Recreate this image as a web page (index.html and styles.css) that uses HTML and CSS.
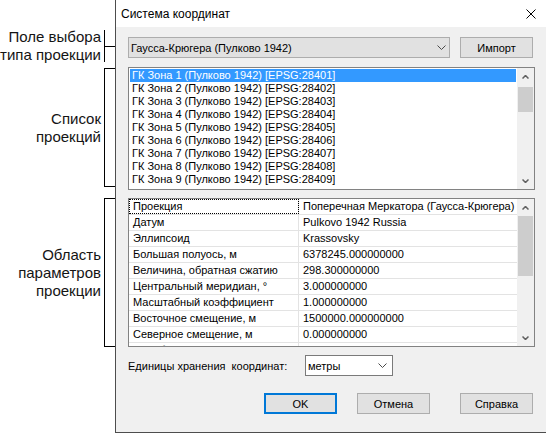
FILE: index.html
```html
<!DOCTYPE html>
<html lang="ru">
<head>
<meta charset="utf-8">
<title>Система координат</title>
<link rel="stylesheet" href="styles.css">
</head>
<body>
<div class="screen">
  <aside class="notes">
    <div class="note n1">
      <div class="note-text">Поле выбора<br>типа проекции</div>
      <div class="bracket"><span class="tick"></span></div>
    </div>
    <div class="note n2">
      <div class="note-text">Список<br>проекций</div>
      <div class="bracket"></div>
    </div>
    <div class="note n3">
      <div class="note-text">Область<br>параметров<br>проекции</div>
      <div class="bracket"></div>
    </div>
  </aside>

  <section class="dialog">
    <header class="titlebar">
      <span class="title">Система координат</span>
      <svg class="close" width="10" height="10" viewBox="0 0 10 10"><path d="M0.5 0.5L9.5 9.5M9.5 0.5L0.5 9.5" stroke="#000" stroke-width="1" fill="none"/></svg>
    </header>

    <div class="content">
      <div class="top-row">
        <div class="combo">
          <span>Гаусса-Крюгера (Пулково 1942)</span>
          <svg width="9" height="5" viewBox="0 0 9 5"><polyline points="0.5,0.5 4.5,4.5 8.5,0.5" fill="none" stroke="#4a4a4a" stroke-width="1"/></svg>
        </div>
        <button class="btn">Импорт</button>
      </div>

      <div class="listbox">
        <ul class="list">
          <li class="sel">ГК Зона 1 (Пулково 1942) [EPSG:28401]</li>
          <li>ГК Зона 2 (Пулково 1942) [EPSG:28402]</li>
          <li>ГК Зона 3 (Пулково 1942) [EPSG:28403]</li>
          <li>ГК Зона 4 (Пулково 1942) [EPSG:28404]</li>
          <li>ГК Зона 5 (Пулково 1942) [EPSG:28405]</li>
          <li>ГК Зона 6 (Пулково 1942) [EPSG:28406]</li>
          <li>ГК Зона 7 (Пулково 1942) [EPSG:28407]</li>
          <li>ГК Зона 8 (Пулково 1942) [EPSG:28408]</li>
          <li>ГК Зона 9 (Пулково 1942) [EPSG:28409]</li>
        </ul>
        <div class="vscroll">
          <div class="arrow"><svg width="7" height="4" viewBox="0 0 7 4"><polyline points="0.5,3.5 3.5,0.5 6.5,3.5" fill="none" stroke="#606060" stroke-width="1.5"/></svg></div>
          <div class="track"><div class="thumb list-thumb"></div></div>
          <div class="arrow"><svg width="7" height="4" viewBox="0 0 7 4"><polyline points="0.5,0.5 3.5,3.5 6.5,0.5" fill="none" stroke="#606060" stroke-width="1.5"/></svg></div>
        </div>
      </div>

      <div class="grid">
        <div class="props">
          <div class="prow"><div class="pname focus">Проекция</div><div class="pval">Поперечная Меркатора (Гаусса-Крюгера)</div></div>
          <div class="prow"><div class="pname">Датум</div><div class="pval">Pulkovo 1942 Russia</div></div>
          <div class="prow"><div class="pname">Эллипсоид</div><div class="pval">Krassovsky</div></div>
          <div class="prow"><div class="pname">Большая полуось, м</div><div class="pval">6378245.000000000</div></div>
          <div class="prow"><div class="pname">Величина, обратная сжатию</div><div class="pval">298.300000000</div></div>
          <div class="prow"><div class="pname">Центральный меридиан, °</div><div class="pval">3.000000000</div></div>
          <div class="prow"><div class="pname">Масштабный коэффициент</div><div class="pval">1.000000000</div></div>
          <div class="prow"><div class="pname">Восточное смещение, м</div><div class="pval">1500000.000000000</div></div>
          <div class="prow"><div class="pname">Северное смещение, м</div><div class="pval">0.000000000</div></div>
          <div class="prow"><div class="pname">Преобразование в WGS84</div><div class="pval"></div></div>
        </div>
        <div class="vscroll">
          <div class="arrow"><svg width="7" height="4" viewBox="0 0 7 4"><polyline points="0.5,3.5 3.5,0.5 6.5,3.5" fill="none" stroke="#606060" stroke-width="1.5"/></svg></div>
          <div class="track"><div class="thumb grid-thumb"></div></div>
          <div class="arrow"><svg width="7" height="4" viewBox="0 0 7 4"><polyline points="0.5,0.5 3.5,3.5 6.5,0.5" fill="none" stroke="#606060" stroke-width="1.5"/></svg></div>
        </div>
      </div>

      <div class="units">
        <span class="units-label">Единицы хранения&nbsp; координат:</span>
        <div class="ucombo">
          <span>метры</span>
          <svg width="9" height="5" viewBox="0 0 9 5"><polyline points="0.5,0.5 4.5,4.5 8.5,0.5" fill="none" stroke="#4a4a4a" stroke-width="1"/></svg>
        </div>
      </div>

      <div class="buttons">
        <button class="btn default">OK</button>
        <button class="btn cancel">Отмена</button>
        <button class="btn">Справка</button>
      </div>
    </div>
  </section>
</div>
</body>
</html>
```

FILE: styles.css
```css
* { box-sizing: border-box; }
html, body { margin: 0; padding: 0; }
body {
  width: 546px;
  height: 433px;
  overflow: hidden;
  background: #fff;
  font-family: "Liberation Sans", Arial, sans-serif;
  color: #000;
}
.screen { display: flex; height: 433px; }

/* annotations */
.notes {
  width: 115px;
  flex: none;
  display: flex;
  flex-direction: column;
  padding-top: 30px;
}
.note { display: flex; flex: none; }
.note-text {
  flex: 1;
  align-self: center;
  text-align: right;
  padding-right: 3px;
  font-size: 15px;
  line-height: 18px;
  color: #141414;
}
.bracket { width: 11px; flex: none; border-left: 1px solid #000; }
.n1 { height: 32px; }
.n1 .bracket { display: flex; align-items: center; }
.tick { display: block; width: 100%; height: 1px; background: #000; }
.n2 { height: 119px; margin-top: 6px; }
.n3 { height: 149px; margin-top: 11px; }
.n2 .bracket, .n3 .bracket { border-top: 1px solid #000; border-bottom: 1px solid #000; }

/* dialog */
.dialog {
  flex: 1;
  display: flex;
  flex-direction: column;
  background: #f0f0f0;
  border-left: 1px solid #4d4d4d;
  border-bottom: 1px solid #4d4d4d;
}
.titlebar {
  height: 27px;
  flex: none;
  background: #fff;
  display: flex;
  align-items: center;
  justify-content: space-between;
  padding: 0 10px 0 5px;
  font-size: 12px;
}
.close { display: block; }
.content {
  display: flex;
  flex-direction: column;
  padding: 10px 11px 0 12px;
  font-size: 11px;
}
.top-row { display: flex; height: 21px; margin-right: 2px; }
.combo {
  width: 322px;
  height: 21px;
  border: 1px solid #adadad;
  background: #e1e1e1;
  display: flex;
  align-items: center;
  justify-content: space-between;
  padding: 0 3px 0 2px;
}
.combo svg, .ucombo svg { display: block; }
.btn {
  width: 73px;
  height: 21px;
  border: 1px solid #adadad;
  background: #e1e1e1;
  font-family: "Liberation Sans", Arial, sans-serif;
  font-size: 11px;
  color: #000;
  padding: 0;
  display: flex;
  align-items: center;
  justify-content: center;
}
.top-row .btn { margin-left: auto; }
.btn.default { border: 2px solid #0078d7; }

/* list */
.listbox {
  margin-top: 9px;
  height: 123px;
  border: 1px solid #828282;
  background: #fff;
  display: flex;
}
.list {
  flex: 1;
  list-style: none;
  margin: 0;
  padding: 1px;
  overflow: hidden;
}
.list li {
  height: 13px;
  line-height: 13px;
  padding-left: 2px;
  white-space: nowrap;
}
.list li.sel { background: #3399ff; color: #fff; }

.vscroll {
  width: 17px;
  flex: none;
  background: #f0f0f0;
  display: flex;
  flex-direction: column;
}
.arrow {
  height: 17px;
  flex: none;
  display: flex;
  align-items: center;
  justify-content: center;
}
.arrow svg { display: block; }
.track { flex: 1; padding: 0 1px; }
.thumb { background: #cdcdcd; }
.list-thumb { margin-top: 2px; height: 25px; }
.grid-thumb { height: 60px; }

/* property grid */
.grid {
  margin-top: 8px;
  height: 149px;
  border: 1px solid #828282;
  background: #fff;
  display: flex;
}
.props { flex: 1; overflow: hidden; }
.prow {
  display: grid;
  grid-template-columns: 170px 1fr;
  height: 16px;
  border-bottom: 1px solid #e3e3e3;
  line-height: 15px;
  white-space: nowrap;
}
.pname {
  border-right: 1px solid #e3e3e3;
  padding-left: 4px;
  overflow: hidden;
}
.pname.focus { outline: 1px dotted #000; outline-offset: -1px; }
.pval { padding-left: 4px; overflow: hidden; }

/* units */
.units {
  margin-top: 8px;
  height: 21px;
  display: flex;
  align-items: center;
}
.units-label { width: 177px; flex: none; }
.ucombo {
  width: 88px;
  height: 21px;
  border: 1px solid #7a7a7a;
  background: #fff;
  display: flex;
  align-items: center;
  justify-content: space-between;
  padding: 0 5px 0 2px;
}

/* buttons */
.buttons {
  margin-top: 17px;
  margin-right: 2px;
  display: flex;
  justify-content: flex-end;
}
.btn.cancel { margin: 0 30px 0 20px; }
```
